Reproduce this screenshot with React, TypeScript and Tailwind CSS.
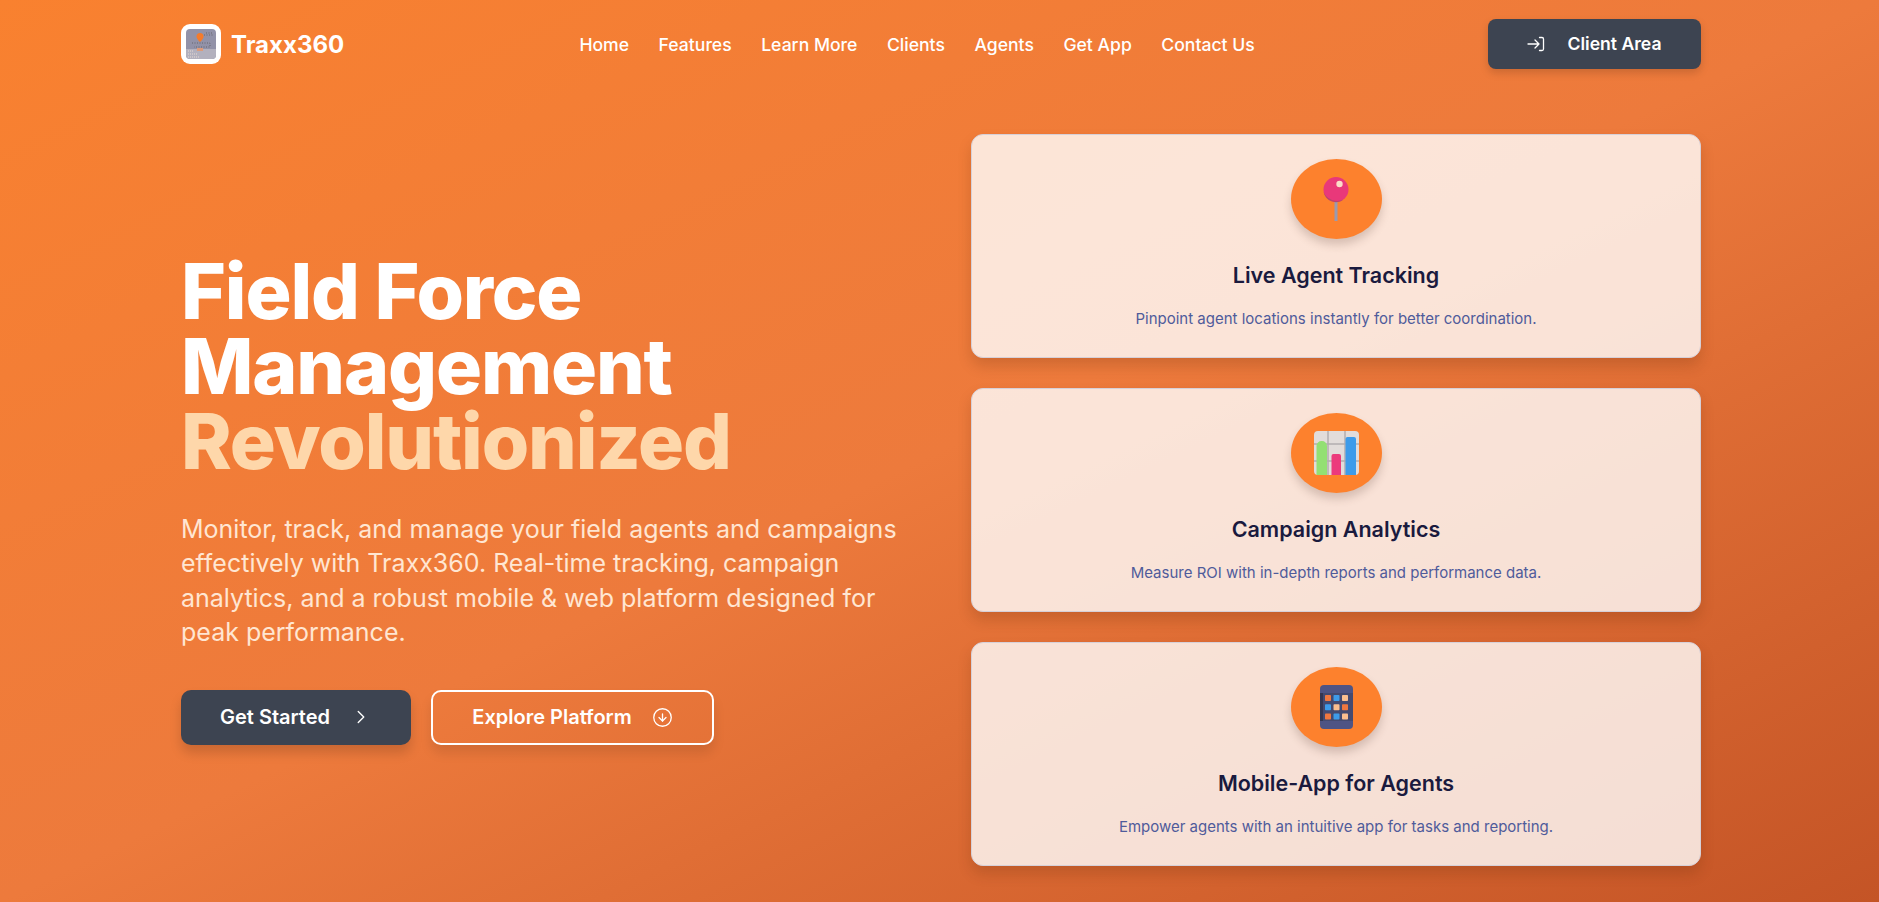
import { ChevronRight, ArrowDownCircle } from "lucide-react";
import type { ReactNode } from "react";

const navLinks = ["Home", "Features", "Learn More", "Clients", "Agents", "Get App", "Contact Us"];

function PinIcon() {
  return (
    <svg width="26" height="44" viewBox="0 0 26 44" aria-hidden="true">
      <rect x="11.500" y="24" width="3" height="20" fill="#9a9ab0" />
      <circle cx="13" cy="12.500" r="12.500" fill="#e9387a" />
      <path d="M.6 15a12.500 12.500 0 0 0 20 7.500A15 15 0 0 1 .6 15z" fill="#b8476c" />
      <circle cx="16.500" cy="7" r="3.200" fill="#fbdcc8" />
    </svg>
  );
}

function ChartIcon() {
  return (
    <svg width="45" height="44" viewBox="0 0 45 44" aria-hidden="true">
      <rect width="45" height="44" rx="4" fill="#e2dcda" />
      <path d="M0 13h45M0 30h45M14 0v44M31 0v44" stroke="#b3adb0" strokeWidth="1.500" />
      <path d="M2.500 15a5 5 0 0 1 5-5h0.500a5 5 0 0 1 5 5v29H2.500z" fill="#93e073" />
      <path d="M17.500 25a2 2 0 0 1 2-2h5.500a2 2 0 0 1 2 2v19h-9.500z" fill="#ec3a7c" />
      <path d="M31.500 8a2 2 0 0 1 2-2h6.500a2 2 0 0 1 2 2v36H31.500z" fill="#3d9bea" />
    </svg>
  );
}

function PhoneIcon() {
  const cells = ["#f0773f", "#3d9bea", "#fbbf8f", "#3d9bea", "#fbbf8f", "#f0773f", "#f0773f", "#3d9bea", "#fbbf8f"];
  return (
    <svg width="33" height="44" viewBox="0 0 33 44" aria-hidden="true">
      <rect width="33" height="44" rx="4" fill="#4e5484" />
      <rect x="0" y="8" width="3" height="28" fill="#333652" />
      <rect x="3" y="8" width="30" height="28" fill="#444a70" />
      {cells.map((c, i) => (
        <rect key={i} x={5 + (i % 3) * 8.500} y={10 + Math.floor(i / 3) * 9.300} width="6" height="6" rx="0.800" fill={c} />
      ))}
    </svg>
  );
}

function LoginIcon() {
  return (
    <svg width="18" height="16" viewBox="0 0 18 16" fill="none" stroke="currentColor" strokeWidth="1.300" strokeLinecap="round" strokeLinejoin="round" aria-hidden="true">
      <path d="M1 8h11M8 4l4 4-4 4" />
      <path d="M12.500 1.500h2.500a1.500 1.500 0 0 1 1.500 1.500v10a1.500 1.500 0 0 1-1.500 1.500h-2.500" />
    </svg>
  );
}

function FeatureCard({ icon, title, text }: { icon: ReactNode; title: string; text: string }) {
  return (
    <div className="flex h-[224px] flex-col items-center rounded-xl border border-[#d6d0d8] bg-white/80 pt-[24px] shadow-[0_8px_14px_rgba(90,40,10,0.2)]">
      <div className="flex h-[80px] w-[91px] items-center justify-center rounded-[50%] bg-[#fd812d] shadow-[0_6px_8px_rgba(90,60,50,0.22)]">
        {icon}
      </div>
      <h3 className="mt-[19.500px] text-[21.500px] leading-[34px] font-semibold text-[#1a1a3e]">{title}</h3>
      <p className="mt-[15px] text-[15px] leading-[24px] text-[#4f5b9b]">{text}</p>
    </div>
  );
}

export default function App() {
  return (
    <div className="h-[902px] overflow-hidden bg-gradient-to-br from-[#f9812f] via-[#ed7a3c] to-[#c45426] font-['Inter',sans-serif] text-white">
      <div className="ml-[181px] w-[1520px]">
        <header className="flex h-[88px] items-center justify-between">
          <div className="flex items-center gap-[10px]">
            <div className="h-10 w-10 rounded-[9px] bg-white p-[5px]">
              <svg viewBox="0 0 30 30" className="h-full w-full rounded-sm" aria-hidden="true">
                <rect width="30" height="30" fill="#9292a8" />
                <path d="M0 20h30v10H0z" fill="#b3b1be" />
                <path d="M14 4a3.500 3.500 0 0 1 3.500 3.500C17.500 10 14 13 14 13s-3.500-3-3.500-5.500A3.500 3.500 0 0 1 14 4z" fill="#f47b2c" />
                <rect x="11" y="19" width="6" height="3" fill="#dd9a7a" />
                <path d="M18 6h9M20 4h6M6 14h18v4H8" stroke="#555" strokeWidth="0.700" strokeDasharray="1 1.500" fill="none" />
                <path d="M2 22h6M2 25h9M2 28h12" stroke="#e8dcd4" strokeWidth="1.200" strokeDasharray="1 1" />
              </svg>
            </div>
            <span className="pt-[1px] text-[24px] font-bold">Traxx360</span>
          </div>
          <nav className="flex items-center gap-[29.500px] pt-[3px] pl-[2px]">
            {navLinks.map((link) => (
              <a key={link} href="#" className="text-[17.600px] font-medium">
                {link}
              </a>
            ))}
          </nav>
          <a href="#" className="flex h-[50px] w-[213px] items-center justify-center gap-[22px] rounded-lg bg-[#3d4451] text-[17.600px] font-semibold shadow-[0_4px_8px_rgba(0,0,0,0.15)]">
            <LoginIcon />
            <span className="pt-[1px]">Client Area</span>
          </a>
        </header>

        <main className="grid grid-cols-[730px_730px] justify-between pt-[45.500px]">
          <section className="flex flex-col pt-[120.500px]">
            <h1 className="text-[76.800px] leading-[75px] font-extrabold tracking-[-0.015em]">
              Field Force
              <br />
              Management
              <br />
              <span className="text-[#fed7aa]">Revolutionized</span>
            </h1>
            <p className="mt-[33px] w-[730px] text-[25px] leading-[34.400px] text-[#ffe6d2]">
              Monitor, track, and manage your field agents and campaigns effectively with Traxx360. Real-time tracking, campaign analytics, and a robust mobile &amp; web platform designed for peak performance.
            </p>
            <div className="mt-[40px] flex gap-[20px]">
              <a href="#" className="flex h-[55px] w-[230px] items-center justify-center gap-[20px] rounded-[10px] bg-[#3d4451] text-[20px] font-semibold shadow-[0_8px_12px_rgba(0,0,0,0.15)]">
                Get Started
                <ChevronRight size={22} strokeWidth={1.500} />
              </a>
              <a href="#" className="flex h-[55px] w-[283px] items-center justify-center gap-[20px] rounded-[10px] border-2 border-white text-[20px] font-semibold shadow-[0_8px_12px_rgba(0,0,0,0.1)]">
                Explore Platform
                <ArrowDownCircle size={21} strokeWidth={1.500} />
              </a>
            </div>
          </section>

          <section className="flex flex-col gap-[30px]">
            <FeatureCard icon={<PinIcon />} title="Live Agent Tracking" text="Pinpoint agent locations instantly for better coordination." />
            <FeatureCard icon={<ChartIcon />} title="Campaign Analytics" text="Measure ROI with in-depth reports and performance data." />
            <FeatureCard icon={<PhoneIcon />} title="Mobile-App for Agents" text="Empower agents with an intuitive app for tasks and reporting." />
          </section>
        </main>
      </div>
    </div>
  );
}
